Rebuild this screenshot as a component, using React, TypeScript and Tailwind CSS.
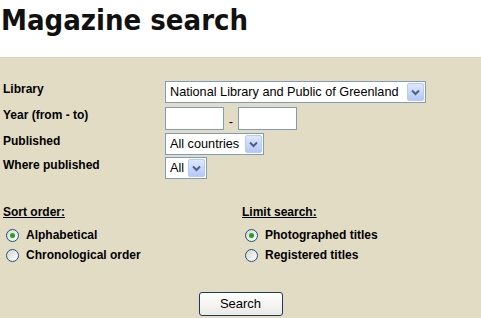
import React from "react";

function Arrow() {
  return (
    <div className="w-[17px] h-[18px] rounded-[2px] border border-[#b9cbf3] bg-gradient-to-b from-[#dfe8fd] to-[#b4c8f6] flex items-center justify-center">
      <svg width="9" height="7" viewBox="0 0 9 7">
        <path d="M1 1.5 L4.5 5 L8 1.5" fill="none" stroke="#4d6185" strokeWidth="2" />
      </svg>
    </div>
  );
}

function Select({ text, w }: { text: string; w: string }) {
  return (
    <div className={`${w} h-[22px] bg-white border border-[#7f9db9] flex items-center justify-between pl-[4px] pr-[1px]`}>
      <span className="text-[12.7px] text-black leading-none whitespace-nowrap">{text}</span>
      <Arrow />
    </div>
  );
}

function Radio({ checked, label }: { checked?: boolean; label: string }) {
  return (
    <div className="flex items-center h-[20px]">
      <div className="ml-[3px] w-[13px] h-[13px] rounded-full border border-[#1c5180] bg-gradient-to-br from-[#d6d6ce] to-white flex items-center justify-center">
        {checked && <div className="w-[5px] h-[5px] rounded-full bg-[#21a121]" />}
      </div>
      <span className="ml-[7px] text-[12px] font-bold text-black">{label}</span>
    </div>
  );
}

function Label({ children }: { children: React.ReactNode }) {
  return <div className="w-[162px] text-[12px] font-bold leading-[14px] pt-[1px]">{children}</div>;
}

export default function App() {
  return (
    <div className="w-[481px] h-[318px] overflow-hidden bg-[#e3dcc5] text-black" style={{ fontFamily: '"Liberation Sans", Arial, sans-serif' }}>
      <div className="h-[58px] bg-white border-b border-[#d9d3bd]">
        <h1 className="text-[29px] font-bold leading-none pt-[6px] pl-[1px] text-[#111]" style={{ fontFamily: '"DejaVu Sans Condensed", "DejaVu Sans", Verdana, sans-serif' }}>
          Magazine search
        </h1>
      </div>
      <div className="pt-[23px] pl-[3px]">
        <div className="flex flex-col">
          <div className="flex h-[26px]">
            <Label>Library</Label>
            <Select text="National Library and Public of Greenland" w="w-[261px]" />
          </div>
          <div className="flex h-[26px]">
            <Label>Year (from - to)</Label>
            <div className="flex items-start h-[23px]">
              <div className="w-[59px] h-[23px] bg-white border border-[#7f9db9]" />
              <span className="w-[14px] text-center text-[13px] leading-none mt-[8px]">-</span>
              <div className="w-[59px] h-[23px] bg-white border border-[#7f9db9]" />
            </div>
          </div>
          <div className="flex h-[24px]">
            <Label>Published</Label>
            <Select text="All countries" w="w-[99px]" />
          </div>
          <div className="flex h-[22px]">
            <Label>Where published</Label>
            <Select text="All" w="w-[42px]" />
          </div>
        </div>
        <div className="grid grid-cols-[239px_1fr] mt-[24px]">
          <div>
            <div className="text-[12px] font-bold underline h-[18px] leading-[18px]">Sort order:</div>
            <div className="mt-[4px]">
              <Radio checked label="Alphabetical" />
              <Radio label="Chronological order" />
            </div>
          </div>
          <div>
            <div className="text-[12px] font-bold underline h-[18px] leading-[18px]">Limit search:</div>
            <div className="mt-[4px]">
              <Radio checked label="Photographed titles" />
              <Radio label="Registered titles" />
            </div>
          </div>
        </div>
      </div>
      <div className="flex justify-center mt-[27px]">
        <div className="w-[84px] h-[24px] rounded-[3px] border border-[#1c3a5a] bg-gradient-to-b from-white to-[#ebeae4] flex items-center justify-center text-[13px]">
          Search
        </div>
      </div>
    </div>
  );
}
